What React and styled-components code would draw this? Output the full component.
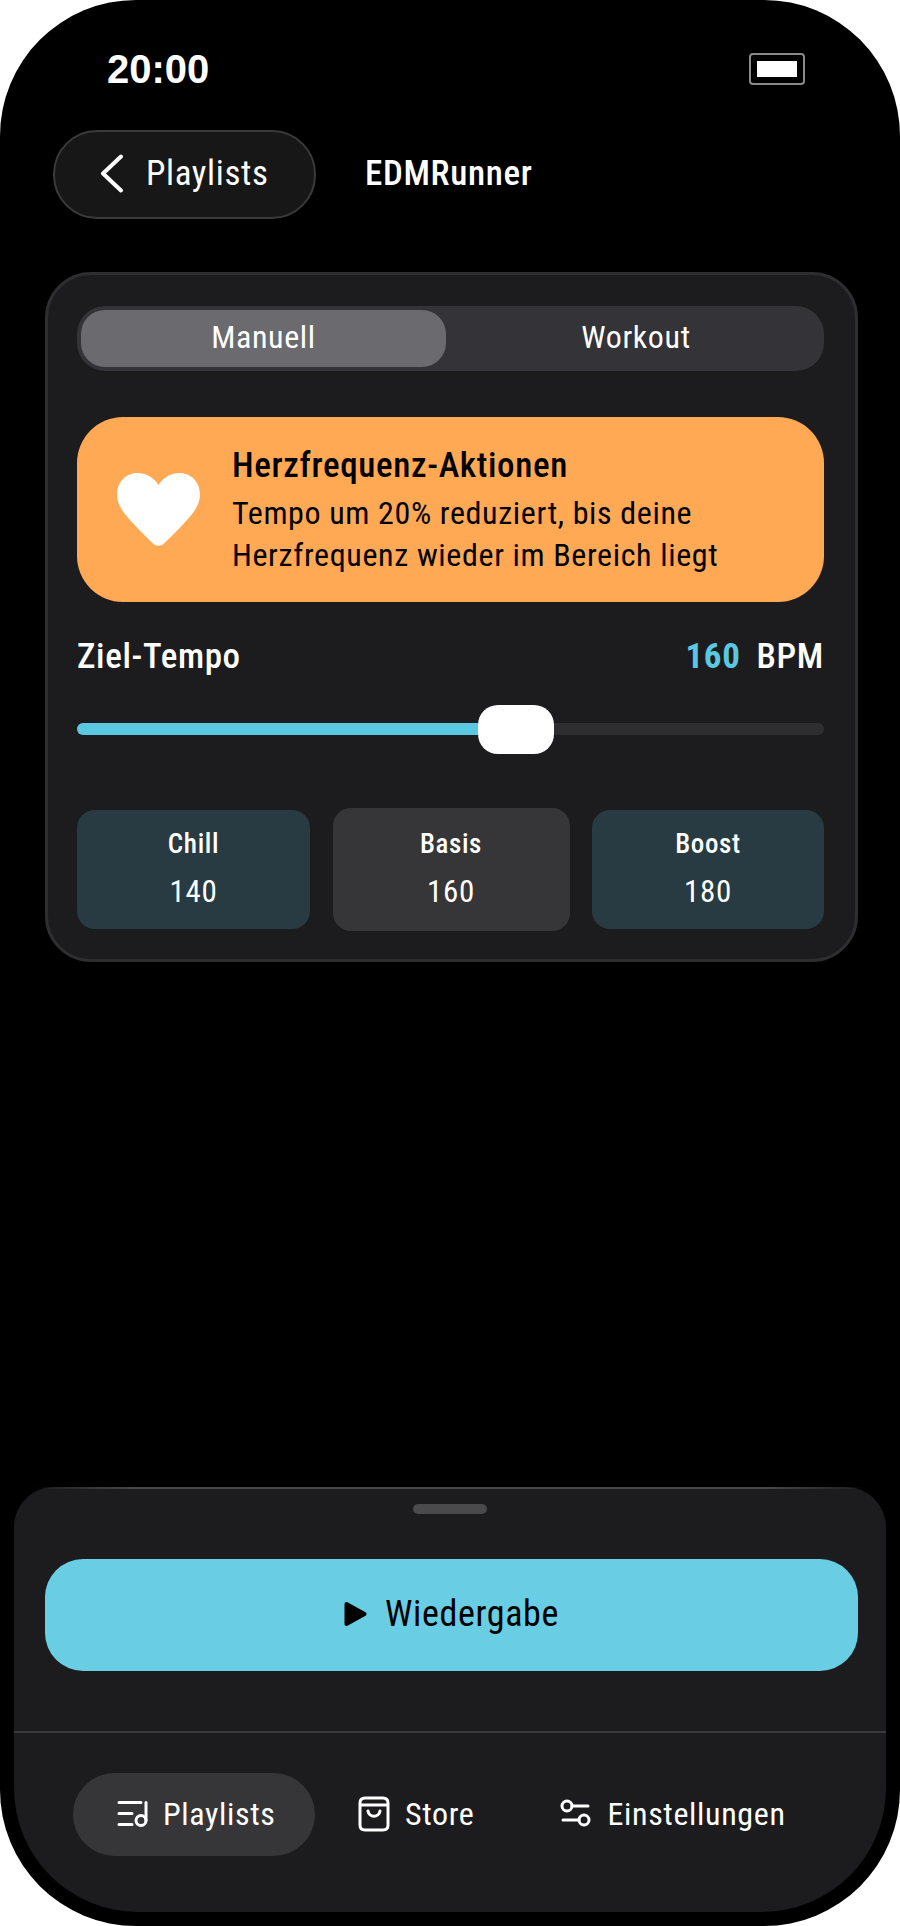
import styled, { createGlobalStyle } from "styled-components"

const GlobalStyle = createGlobalStyle`
  html, body {
    margin: 0;
    padding: 0;
    background: #fff;
  }
  body {
    font-family: "Roboto", "Noto Sans", sans-serif;
    font-stretch: 75%;
    letter-spacing: 0.04em;
  }
`

// Black phone screen, fills the window
const Phone = styled.div`
  width: 900px;
  height: 1926px;
  box-sizing: border-box;
  background: #000;
  border-radius: 136px;
  display: flex;
  flex-direction: column;
  color: #fff;
  overflow: hidden;
`

const StatusBar = styled.div`
  display: flex;
  align-items: center;
  justify-content: space-between;
  padding: 46px 95px 0 107px;
  height: 46px;
`

const Clock = styled.span`
  font-family: "Liberation Sans", sans-serif;
  font-stretch: normal;
  font-weight: 700;
  font-size: 40px;
  letter-spacing: 0;
`

const Battery = styled.div`
  width: 56px;
  height: 32px;
  box-sizing: border-box;
  border: 2px solid #8a8a8a;
  border-radius: 4px;
  padding: 6px;
  display: flex;
  &::before {
    content: "";
    flex: 1;
    background: #fff;
  }
`

const Header = styled.div`
  display: flex;
  align-items: center;
  gap: 49px;
  margin: 38px 0 0 53px;
`

const BackButton = styled.div`
  width: 263px;
  height: 89px;
  box-sizing: border-box;
  background: #171717;
  border: 2px solid #3a3a3a;
  border-radius: 44px;
  display: flex;
  align-items: center;
  gap: 22px;
  padding-left: 45px;
  font-size: 35px;
  line-height: 44px;
  padding-bottom: 2px;
`

const Title = styled.span`
  font-size: 35px;
  font-weight: 500;
  line-height: 44px;
  padding-bottom: 2px;
`

const Card = styled.section`
  margin: 53px 42px 0 45px;
  height: 690px;
  box-sizing: border-box;
  background: #1c1c1e;
  border: 3px solid #2e2e30;
  border-radius: 46px;
  padding: 31px 31px 0 29px;
`

const Segments = styled.div`
  height: 65px;
  box-sizing: border-box;
  background: #333338;
  border-radius: 28px;
  padding: 4px;
  display: grid;
  grid-template-columns: 365px 1fr;
  font-size: 32px;
`

const Segment = styled.div`
  display: flex;
  align-items: center;
  justify-content: center;
  border-radius: 24px;
  padding: 0 0 4px ${(p) => (p.$active ? "0" : "6px")};
  background: ${(p) => (p.$active ? "#6a6a6f" : "transparent")};
`

const Alert = styled.div`
  margin-top: 46px;
  height: 185px;
  box-sizing: border-box;
  background: #ffa955;
  border-radius: 46px;
  color: #000;
  display: flex;
  align-items: center;
  gap: 32px;
  padding-left: 40px;
`

const AlertTitle = styled.div`
  font-size: 35px;
  font-weight: 500;
  line-height: 44px;
  margin-bottom: 4px;
`

const AlertBody = styled.div`
  font-size: 32px;
  line-height: 42px;
`

const TempoRow = styled.div`
  margin-top: 33px;
  display: flex;
  justify-content: space-between;
  align-items: center;
  font-size: 35px;
  font-weight: 500;
  line-height: 44px;
`

const Bpm = styled.span`
  display: flex;
  gap: 16px;
  font-weight: 500;
`

const BpmValue = styled.span`
  color: #5ac8e0;
  font-weight: 700;
`

const SliderTrack = styled.div`
  position: relative;
  margin-top: 44px;
  height: 12px;
  background: #2e2e30;
  border-radius: 6px;
`

const SliderFill = styled.div`
  height: 100%;
  background: #5ac8e0;
  border-radius: 6px;
`

const SliderThumb = styled.div`
  position: absolute;
  top: -18px;
  width: 76px;
  height: 49px;
  background: #fff;
  border-radius: 20px;
  transform: translateX(-50%);
`

const Presets = styled.div`
  margin-top: 73px;
  display: grid;
  grid-template-columns: 233px 237px 232px;
  justify-content: space-between;
  align-items: center;
`

const Preset = styled.div`
  height: ${(p) => (p.$active ? 123 : 119)}px;
  background: ${(p) => (p.$active ? "#363638" : "#283a42")};
  border-radius: 18px;
  display: flex;
  flex-direction: column;
  align-items: center;
  justify-content: center;
  gap: 14px;
  padding-bottom: 4px;
  box-sizing: border-box;
`

const PresetName = styled.span`
  font-size: 27px;
  font-weight: 500;
  line-height: 34px;
`

const PresetValue = styled.span`
  font-size: 31px;
  line-height: 34px;
`

// Bottom sheet with play button and tab bar
const Sheet = styled.div`
  position: relative;
  margin: auto 14px 14px;
  height: 425px;
  box-sizing: border-box;
  background: #1c1c1e;
  padding-top: 2px;
  border-radius: 40px 40px 124px 124px;
  display: flex;
  flex-direction: column;
  &::before {
    content: "";
    position: absolute;
    top: 0;
    left: 20px;
    right: 20px;
    height: 2px;
    background: linear-gradient(90deg, transparent, #48484a 12%, #48484a 88%, transparent);
  }
`

const Handle = styled.div`
  align-self: center;
  margin-top: 15px;
  width: 74px;
  height: 10px;
  background: #4a4a4c;
  border-radius: 5px;
`

const PlayButton = styled.div`
  margin: 45px 28px 0 31px;
  height: 112px;
  background: #69cde3;
  border-radius: 38px;
  color: #000;
  display: flex;
  align-items: center;
  justify-content: center;
  gap: 18px;
  font-size: 36px;
  padding-bottom: 2px;
  box-sizing: border-box;
`

const Divider = styled.div`
  margin-top: 60px;
  height: 2px;
  background: #3a3a3c;
`

const TabBar = styled.nav`
  display: flex;
  align-items: center;
  margin: 40px 0 0 59px;
  font-size: 32px;
`

const Tab = styled.div`
  height: 83px;
  width: ${(p) => (p.$active ? "242px" : "auto")};
  box-sizing: border-box;
  border-radius: 42px;
  display: flex;
  align-items: center;
  gap: ${(p) => p.$gap}px;
  background: ${(p) => (p.$active ? "#363638" : "transparent")};
  padding: 0 0 2px ${(p) => (p.$active ? "44px" : "0")};
  margin-left: ${(p) => p.$offset || 0}px;
`

const Chevron = () => (
  <svg width="24" height="39" viewBox="0 0 24 39" fill="none" stroke="#fff" strokeWidth="4" strokeLinecap="round" strokeLinejoin="round">
    <path d="M21 2.5 L3 19.5 L21 36.5" />
  </svg>
)

const Heart = () => (
  <svg width="83" height="73" viewBox="0 0 83 73" fill="#fff">
    <path d="M41.500 12C36 3.500 28 0 20.500 0C8.500 0 0 9.500 0 21.500C0 33.500 9 43 19 53.500C25.500 60.500 31.500 66 36 70.500C39 73.500 44 73.500 47 70.500C51.500 66 57.500 60.500 64 53.500C74 43 83 33.500 83 21.500C83 9.500 74.500 0 62.500 0C55 0 47 3.500 41.500 12Z" />
  </svg>
)

const PlayIcon = () => (
  <svg width="23" height="26" viewBox="0 0 23 26" fill="#000" stroke="#000" strokeWidth="4" strokeLinejoin="round">
    <path d="M2.500 3 L20.500 13 L2.500 23 Z" />
  </svg>
)

const PlaylistIcon = () => (
  <svg width="33" height="27" viewBox="0 0 33 27" fill="none" stroke="#fff" strokeWidth="3" strokeLinecap="round">
    <path d="M2 2.500H24M2 13.500H15M2 24.500H15" />
    <circle cx="24" cy="20.500" r="5" />
    <path d="M29 2.500V20.500" />
  </svg>
)

const StoreIcon = () => (
  <svg width="32" height="36" viewBox="0 0 32 36" fill="none" stroke="#fff" strokeWidth="3" strokeLinecap="round" strokeLinejoin="round">
    <path d="M7 2H25Q30 2 30 7V29Q30 34 25 34H7Q2 34 2 29V7Q2 2 7 2Z" />
    <path d="M2.500 9H29.500" />
    <path d="M10 15C11 22 21 22 22 15" />
  </svg>
)

const SettingsIcon = () => (
  <svg width="31" height="29" viewBox="0 0 31 29" fill="none" stroke="#fff" strokeWidth="3" strokeLinecap="round">
    <circle cx="7" cy="7" r="5" />
    <path d="M12 7H28" />
    <path d="M3 21H19" />
    <circle cx="24" cy="21" r="5" />
  </svg>
)

const presets = [
  { name: "Chill", value: 140 },
  { name: "Basis", value: 160, active: true },
  { name: "Boost", value: 180 },
]

const App = () => {
  const sliderPos = 58.8
  return (
    <Phone>
      <GlobalStyle />
      <StatusBar>
        <Clock>20:00</Clock>
        <Battery />
      </StatusBar>
      <Header>
        <BackButton>
          <Chevron />
          Playlists
        </BackButton>
        <Title>EDMRunner</Title>
      </Header>
      <Card>
        <Segments>
          <Segment $active>Manuell</Segment>
          <Segment>Workout</Segment>
        </Segments>
        <Alert>
          <Heart />
          <div>
            <AlertTitle>Herzfrequenz-Aktionen</AlertTitle>
            <AlertBody>
              Tempo um 20% reduziert, bis deine
              <br />
              Herzfrequenz wieder im Bereich liegt
            </AlertBody>
          </div>
        </Alert>
        <TempoRow>
          Ziel-Tempo
          <Bpm>
            <BpmValue>160</BpmValue>
            BPM
          </Bpm>
        </TempoRow>
        <SliderTrack>
          <SliderFill style={{ width: `${sliderPos}%` }} />
          <SliderThumb style={{ left: `${sliderPos}%` }} />
        </SliderTrack>
        <Presets>
          {presets.map((p) => (
            <Preset key={p.name} $active={p.active}>
              <PresetName>{p.name}</PresetName>
              <PresetValue>{p.value}</PresetValue>
            </Preset>
          ))}
        </Presets>
      </Card>
      <Sheet>
        <Handle />
        <PlayButton>
          <PlayIcon />
          Wiedergabe
        </PlayButton>
        <Divider />
        <TabBar>
          <Tab $active $gap={13}>
            <PlaylistIcon />
            Playlists
          </Tab>
          <Tab $offset={43} $gap={15}>
            <StoreIcon />
            Store
          </Tab>
          <Tab $offset={86} $gap={16}>
            <SettingsIcon />
            Einstellungen
          </Tab>
        </TabBar>
      </Sheet>
    </Phone>
  )
}

export default App
